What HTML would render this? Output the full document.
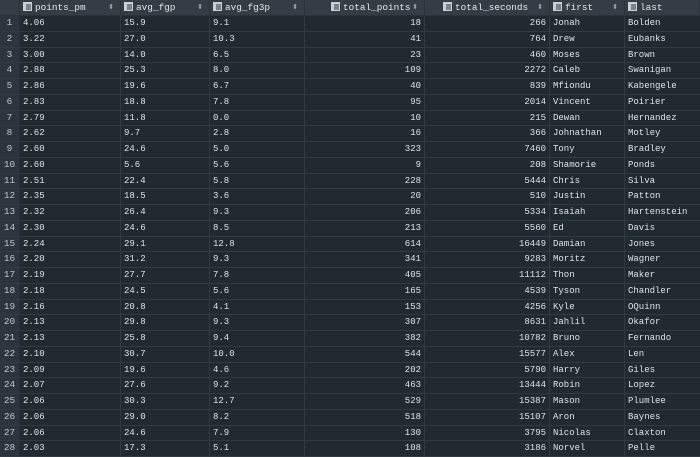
<!DOCTYPE html>
<html><head><meta charset="utf-8"><style>
body{margin:0;width:700px;height:456px;background:#222a31;overflow:hidden;font-family:"Liberation Mono",monospace;font-size:9px;color:#dde2e6}
.r{position:relative;height:15.75px;box-sizing:border-box;border-bottom:1px solid #303a43;display:flex;white-space:nowrap}
.h{height:16px;background:#343d46;border-bottom:1px solid #2a323a;color:#e3e7ea;font-size:9.4px}
.c{box-sizing:border-box;border-right:1px solid #303a43;padding:0 3px;line-height:15px;overflow:hidden}
.h .c{border-right:1px solid #2a323a;line-height:16px;position:relative}
.n{width:20px;background:#2c353e;text-align:center;color:#c0c8cf;padding:0;border-right:1px solid #27303a;font-size:9.4px;line-height:14px}
.h .n{background:#343d46}
.c1{width:101px}.c2{width:89px}.c3{width:95px}.c4{width:120px;text-align:right}.c5{width:125px;text-align:right}.c6{width:75px}.c7{width:75px;border-right:none}
.h .c4,.h .c5{text-align:left}
.ic{display:inline-block;width:9px;height:9px;background:#c9cfd5;margin-right:3px;vertical-align:-1px;position:relative}
.ic:after{content:"";position:absolute;left:3px;top:2px;width:5px;height:6px;background:#7a838c}
.s{position:absolute;right:6px;top:0;color:#9aa3ab;font-size:7px}
</style></head><body>
<div class="r h"><div class="c n"></div><div class="c c1"><span class="ic"></span>points_pm<span class="s">⬍</span></div><div class="c c2"><span class="ic"></span>avg_fgp<span class="s">⬍</span></div><div class="c c3"><span class="ic"></span>avg_fg3p<span class="s">⬍</span></div><div class="c c4" style="padding-left:26px"><span class="ic"></span>total_points<span class="s">⬍</span></div><div class="c c5" style="padding-left:18px"><span class="ic"></span>total_seconds<span class="s">⬍</span></div><div class="c c6"><span class="ic"></span>first<span class="s">⬍</span></div><div class="c c7"><span class="ic"></span>last</div></div>
<div class="r"><div class="c n">1</div><div class="c c1">4.06</div><div class="c c2">15.9</div><div class="c c3">9.1</div><div class="c c4">18</div><div class="c c5">266</div><div class="c c6">Jonah</div><div class="c c7">Bolden</div></div>
<div class="r"><div class="c n">2</div><div class="c c1">3.22</div><div class="c c2">27.0</div><div class="c c3">10.3</div><div class="c c4">41</div><div class="c c5">764</div><div class="c c6">Drew</div><div class="c c7">Eubanks</div></div>
<div class="r"><div class="c n">3</div><div class="c c1">3.00</div><div class="c c2">14.0</div><div class="c c3">6.5</div><div class="c c4">23</div><div class="c c5">460</div><div class="c c6">Moses</div><div class="c c7">Brown</div></div>
<div class="r"><div class="c n">4</div><div class="c c1">2.88</div><div class="c c2">25.3</div><div class="c c3">8.0</div><div class="c c4">109</div><div class="c c5">2272</div><div class="c c6">Caleb</div><div class="c c7">Swanigan</div></div>
<div class="r"><div class="c n">5</div><div class="c c1">2.86</div><div class="c c2">19.6</div><div class="c c3">6.7</div><div class="c c4">40</div><div class="c c5">839</div><div class="c c6">Mfiondu</div><div class="c c7">Kabengele</div></div>
<div class="r"><div class="c n">6</div><div class="c c1">2.83</div><div class="c c2">18.8</div><div class="c c3">7.8</div><div class="c c4">95</div><div class="c c5">2014</div><div class="c c6">Vincent</div><div class="c c7">Poirier</div></div>
<div class="r"><div class="c n">7</div><div class="c c1">2.79</div><div class="c c2">11.8</div><div class="c c3">0.0</div><div class="c c4">10</div><div class="c c5">215</div><div class="c c6">Dewan</div><div class="c c7">Hernandez</div></div>
<div class="r"><div class="c n">8</div><div class="c c1">2.62</div><div class="c c2">9.7</div><div class="c c3">2.8</div><div class="c c4">16</div><div class="c c5">366</div><div class="c c6">Johnathan</div><div class="c c7">Motley</div></div>
<div class="r"><div class="c n">9</div><div class="c c1">2.60</div><div class="c c2">24.6</div><div class="c c3">5.0</div><div class="c c4">323</div><div class="c c5">7460</div><div class="c c6">Tony</div><div class="c c7">Bradley</div></div>
<div class="r"><div class="c n">10</div><div class="c c1">2.60</div><div class="c c2">5.6</div><div class="c c3">5.6</div><div class="c c4">9</div><div class="c c5">208</div><div class="c c6">Shamorie</div><div class="c c7">Ponds</div></div>
<div class="r"><div class="c n">11</div><div class="c c1">2.51</div><div class="c c2">22.4</div><div class="c c3">5.8</div><div class="c c4">228</div><div class="c c5">5444</div><div class="c c6">Chris</div><div class="c c7">Silva</div></div>
<div class="r"><div class="c n">12</div><div class="c c1">2.35</div><div class="c c2">18.5</div><div class="c c3">3.6</div><div class="c c4">20</div><div class="c c5">510</div><div class="c c6">Justin</div><div class="c c7">Patton</div></div>
<div class="r"><div class="c n">13</div><div class="c c1">2.32</div><div class="c c2">26.4</div><div class="c c3">9.3</div><div class="c c4">206</div><div class="c c5">5334</div><div class="c c6">Isaiah</div><div class="c c7">Hartenstein</div></div>
<div class="r"><div class="c n">14</div><div class="c c1">2.30</div><div class="c c2">24.6</div><div class="c c3">8.5</div><div class="c c4">213</div><div class="c c5">5560</div><div class="c c6">Ed</div><div class="c c7">Davis</div></div>
<div class="r"><div class="c n">15</div><div class="c c1">2.24</div><div class="c c2">29.1</div><div class="c c3">12.8</div><div class="c c4">614</div><div class="c c5">16449</div><div class="c c6">Damian</div><div class="c c7">Jones</div></div>
<div class="r"><div class="c n">16</div><div class="c c1">2.20</div><div class="c c2">31.2</div><div class="c c3">9.3</div><div class="c c4">341</div><div class="c c5">9283</div><div class="c c6">Moritz</div><div class="c c7">Wagner</div></div>
<div class="r"><div class="c n">17</div><div class="c c1">2.19</div><div class="c c2">27.7</div><div class="c c3">7.8</div><div class="c c4">405</div><div class="c c5">11112</div><div class="c c6">Thon</div><div class="c c7">Maker</div></div>
<div class="r"><div class="c n">18</div><div class="c c1">2.18</div><div class="c c2">24.5</div><div class="c c3">5.6</div><div class="c c4">165</div><div class="c c5">4539</div><div class="c c6">Tyson</div><div class="c c7">Chandler</div></div>
<div class="r"><div class="c n">19</div><div class="c c1">2.16</div><div class="c c2">20.8</div><div class="c c3">4.1</div><div class="c c4">153</div><div class="c c5">4256</div><div class="c c6">Kyle</div><div class="c c7">OQuinn</div></div>
<div class="r"><div class="c n">20</div><div class="c c1">2.13</div><div class="c c2">29.8</div><div class="c c3">9.3</div><div class="c c4">307</div><div class="c c5">8631</div><div class="c c6">Jahlil</div><div class="c c7">Okafor</div></div>
<div class="r"><div class="c n">21</div><div class="c c1">2.13</div><div class="c c2">25.8</div><div class="c c3">9.4</div><div class="c c4">382</div><div class="c c5">10782</div><div class="c c6">Bruno</div><div class="c c7">Fernando</div></div>
<div class="r"><div class="c n">22</div><div class="c c1">2.10</div><div class="c c2">30.7</div><div class="c c3">10.0</div><div class="c c4">544</div><div class="c c5">15577</div><div class="c c6">Alex</div><div class="c c7">Len</div></div>
<div class="r"><div class="c n">23</div><div class="c c1">2.09</div><div class="c c2">19.6</div><div class="c c3">4.6</div><div class="c c4">202</div><div class="c c5">5790</div><div class="c c6">Harry</div><div class="c c7">Giles</div></div>
<div class="r"><div class="c n">24</div><div class="c c1">2.07</div><div class="c c2">27.6</div><div class="c c3">9.2</div><div class="c c4">463</div><div class="c c5">13444</div><div class="c c6">Robin</div><div class="c c7">Lopez</div></div>
<div class="r"><div class="c n">25</div><div class="c c1">2.06</div><div class="c c2">30.3</div><div class="c c3">12.7</div><div class="c c4">529</div><div class="c c5">15387</div><div class="c c6">Mason</div><div class="c c7">Plumlee</div></div>
<div class="r"><div class="c n">26</div><div class="c c1">2.06</div><div class="c c2">29.0</div><div class="c c3">8.2</div><div class="c c4">518</div><div class="c c5">15107</div><div class="c c6">Aron</div><div class="c c7">Baynes</div></div>
<div class="r"><div class="c n">27</div><div class="c c1">2.06</div><div class="c c2">24.6</div><div class="c c3">7.9</div><div class="c c4">130</div><div class="c c5">3795</div><div class="c c6">Nicolas</div><div class="c c7">Claxton</div></div>
<div class="r"><div class="c n">28</div><div class="c c1">2.03</div><div class="c c2">17.3</div><div class="c c3">5.1</div><div class="c c4">108</div><div class="c c5">3186</div><div class="c c6">Norvel</div><div class="c c7">Pelle</div></div>
</body></html>
